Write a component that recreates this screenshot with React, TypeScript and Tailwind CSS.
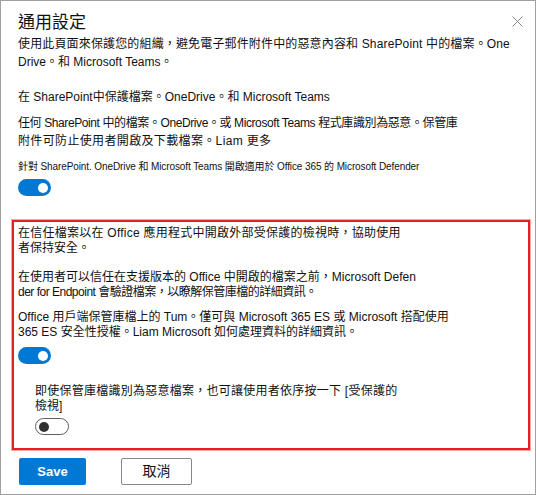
import React from 'react';

function Toggle({ on }: { on: boolean }) {
  return on ? (
    <div className="w-[33px] h-[17px] rounded-full bg-[#0078d4] flex items-center justify-end pr-[3px]">
      <div className="w-[10px] h-[10px] rounded-full bg-white" />
    </div>
  ) : (
    <div className="w-[34px] h-[17px] rounded-full border border-[#605e5c] bg-white flex items-center pl-[3px]">
      <div className="w-[10px] h-[10px] rounded-full bg-[#323130]" />
    </div>
  );
}

export default function App() {
  return (
    <div className="w-[536px] h-[495px] bg-white border border-[#a0a0a0] text-[#111] font-['Liberation_Sans','Noto_Sans_CJK_TC',sans-serif] px-[11px] pt-[10px]">
      {/* Header */}
      <div className="flex items-start justify-between pl-[6px]">
        <h1 className="text-[17px] leading-[24px] font-normal">通用設定</h1>
        <button className="mt-[5px] mr-[1px] text-[#8a8886]">
          <svg width="11" height="11" viewBox="0 0 11 11" fill="none" stroke="currentColor" strokeWidth="1">
            <path d="M0.5 0.5 L10.5 10.5 M10.5 0.5 L0.5 10.5" />
          </svg>
        </button>
      </div>

      <div className="pl-[6px] text-[12px] leading-[18px] whitespace-nowrap">
        <p>
          <span className="block tracking-[0.15px]">
            使用此頁面來保護您的組織，避免電子郵件附件中的惡意內容和 SharePoint 中的檔案。One
          </span>
          <span className="block">Drive。和 Microsoft Teams。</span>
        </p>
        <p className="mt-[17px]">在 SharePoint中保護檔案。OneDrive。和 Microsoft Teams</p>
        <p className="mt-[8px]">
          <span className="block tracking-[-0.4px]">
            任何 SharePoint 中的檔案。OneDrive。或 Microsoft Teams 程式庫識別為惡意。保管庫
          </span>
          <span className="block tracking-[0.35px]">附件可防止使用者開啟及下載檔案。Liam 更多</span>
        </p>
        <p className="mt-[10px] text-[10px] leading-[14px] tracking-[-0.1px]">
          針對 SharePoint. OneDrive 和 Microsoft Teams 開啟適用於 Office 365 的 Microsoft Defender
        </p>
        <div className="mt-[5px]">
          <Toggle on />
        </div>
      </div>

      {/* Highlighted section */}
      <div className="mt-[24px] w-[518px] border-2 border-[#ec1c24] ring-1 ring-[#f6a5a8] pl-[4px] pt-[4px] pb-[13px] text-[12px] leading-[15px] whitespace-nowrap">
        <p>
          <span className="block tracking-[0.25px]">
            在信任檔案以在 Office 應用程式中開啟外部受保護的檢視時，協助使用
          </span>
          <span className="block">者保持安全。</span>
        </p>
        <p className="mt-[14px]">
          <span className="block">
            在使用者可以信任在支援版本的 Office 中開啟的檔案之前，Microsoft Defen
          </span>
          <span className="block tracking-[-0.5px]">
            der for Endpoint 會驗證檔案，以瞭解保管庫檔的詳細資訊。
          </span>
        </p>
        <p className="mt-[10px]">
          <span className="block">
            Office 用戶端保管庫檔上的 Tum。僅可與 Microsoft 365 ES 或 Microsoft 搭配使用
          </span>
          <span className="block">365 ES 安全性授權。Liam Microsoft 如何處理資料的詳細資訊。</span>
        </p>
        <div className="mt-[7px]">
          <Toggle on />
        </div>
        <div className="pl-[17px] mt-[20px]">
          <p>
            <span className="block tracking-[0.25px]">
              即使保管庫檔識別為惡意檔案，也可讓使用者依序按一下 [受保護的
            </span>
            <span className="block">檢視]</span>
          </p>
          <div className="mt-[4px]">
            <Toggle on={false} />
          </div>
        </div>
      </div>

      {/* Footer buttons */}
      <div className="flex gap-[35px] mt-[8px] pl-[7px]">
        <button className="w-[67px] h-[27px] rounded-[2px] bg-[#0078d4] text-white text-[13px] font-semibold">
          Save
        </button>
        <button className="w-[71px] h-[27px] rounded-[2px] border border-[#8a8886] bg-white text-[14px] text-[#111]">
          取消
        </button>
      </div>
    </div>
  );
}
